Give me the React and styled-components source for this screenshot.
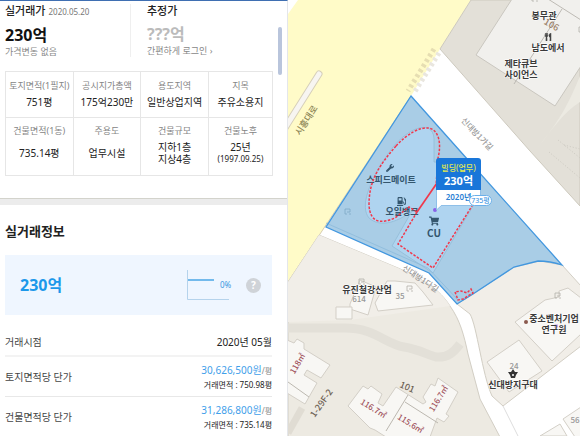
import React from 'react';
import styled, { createGlobalStyle } from 'styled-components';
import { FaWrench, FaGasPump, FaUtensils, FaShoppingCart } from 'react-icons/fa';

const GlobalStyle = createGlobalStyle`
    * {
        box-sizing: border-box;
    }
    body {
        margin: 0;
        background-color: #fff;
        color: #222;
        font-family: "Noto Sans", "Noto Sans CJK KR", sans-serif;
        font-size: 10px;
        line-height: 14px;
    }
    h2, p, dl, dd {
        margin: 0;
    }
`;

const Page = styled.div`
    display: grid;
    grid-template-columns: minmax(0, 288fr) minmax(0, 292fr);
    height: 100vh;
    overflow: hidden;
`;

const Panel = styled.aside`
    position: relative;
    min-width: 0;
    overflow: hidden;
    border-top: 1px solid #3f6fb2;
    border-right: 1px solid #e4e6ea;
`;

const ScrollThumb = styled.div`
    position: absolute;
    top: 26px;
    right: 5px;
    width: 4px;
    height: 48px;
    border-radius: 2px;
    background-color: #b9c5dc;
`;

const Summary = styled.section`
    padding: 3px 14px 22px 5px;
`;

const PriceRow = styled.div`
    display: grid;
    grid-template-columns: 125px 1fr;
    margin-bottom: 14px;
`;

const PriceBox = styled.div`
    padding-left: ${(props) => (props.$divided ? '16px' : '0')};
    border-left: ${(props) => (props.$divided ? '1px solid #efefef' : 'none')};
`;

const PriceTitle = styled.h2`
    font-size: 11px;
    font-weight: 500;
    line-height: 14px;
`;

const PriceDate = styled.span`
    margin-left: 3px;
    color: #777;
    font-size: 8px;
    font-weight: 400;
`;

const Price = styled.p`
    padding: 6px 0 2px;
    color: ${(props) => props.$color};
    font-size: 16px;
    font-weight: 700;
    line-height: 20px;
`;

const Note = styled.p`
    color: #888;
    font-size: 9px;
    line-height: 10px;
`;

const LoginLink = styled.a`
    color: #888;
    text-decoration: none;
`;

const InfoTable = styled.table`
    width: 100%;
    table-layout: fixed;
    border-collapse: collapse;
    text-align: center;
`;

const InfoCell = styled.td`
    height: ${(props) => (props.$tall ? '58px' : '46px')};
    padding: ${(props) => (props.$tall ? '5px 0 0' : '6px 0 0')};
    border: 1px solid #e6e6e6;
    vertical-align: top;
    &:last-child {
        width: 24%;
    }
`;

const InfoLabel = styled.div`
    color: #858585;
    font-size: 9px;
    line-height: 15px;
    white-space: nowrap;
`;

const InfoValue = styled.div`
    display: flex;
    flex-direction: column;
    justify-content: center;
    min-height: ${(props) => (props.$tall ? '29px' : '17px')};
    font-size: 10px;
    line-height: 12px;
    white-space: nowrap;
`;

const SmallText = styled.span`
    font-size: 8px;
`;

const Band = styled.div`
    height: 7px;
    border-top: 1px solid #d3d3cc;
    background-color: #ececec;
`;

const Deal = styled.section`
    padding: 16px 15px 0 5px;
`;

const DealTitle = styled.h2`
    font-size: 13px;
    font-weight: 700;
    line-height: 20px;
`;

const DealBox = styled.div`
    display: flex;
    align-items: center;
    height: 60px;
    margin: 14px 0 13px;
    padding: 0 11px 0 15px;
    background-color: #eff6ff;
`;

const DealPrice = styled.strong`
    flex: 1;
    color: #1c98ea;
    font-size: 16px;
    line-height: 20px;
`;

const Percent = styled.span`
    width: 26px;
    margin-left: -9px;
    color: #3997e0;
    font-size: 8px;
`;

const HelpButton = styled.button`
    width: 15px;
    height: 15px;
    padding: 0;
    border: 0;
    border-radius: 50%;
    background-color: #cfd3d8;
    color: #fff;
    font: inherit;
    font-weight: 700;
    line-height: 15px;
`;

const DealList = styled.dl`
    font-size: 10px;
`;

const DealItem = styled.div`
    display: flex;
    align-items: center;
    justify-content: space-between;
    height: ${(props) => (props.$short ? '29px' : '40px')};
    border-bottom: ${(props) => (props.$short ? '2px solid #f3f3f3' : '1px solid #e8e8e8')};
`;

const DealTerm = styled.dt`
    color: #444;
`;

const DealValue = styled.dd`
    text-align: right;
`;

const UnitPrice = styled.p`
    color: #3fa0ea;
    font-size: 10px;
    line-height: 14px;
`;

const Unit = styled.span`
    color: #888;
    font-size: 8px;
`;

const Area = styled.p`
    font-size: 8px;
    line-height: 13px;
`;

const MapArea = styled.main`
    position: relative;
    min-width: 0;
    overflow: hidden;
    background-color: #edeae2;
`;

const MapSvg = styled.svg`
    display: block;
    width: 100%;
    height: 100%;
    font-family: "Noto Sans CJK KR", sans-serif;
`;

const Poi = styled.text`
    fill: ${(props) => props.$color || '#3a3a3a'};
    font-size: ${(props) => props.$size || 9}px;
    font-weight: 700;
    text-anchor: middle;
    paint-order: stroke;
    stroke: ${(props) => props.$halo || '#fff'};
    stroke-width: 1px;
`;

const Num = styled.text`
    fill: ${(props) => props.$color || '#999'};
    font-size: ${(props) => props.$size || 8}px;
    font-weight: 500;
    text-anchor: middle;
`;

const Pin = styled.button`
    position: absolute;
    top: 158px;
    left: 148px;
    width: 45px;
    padding: 0;
    border: 0;
    background: none;
    font: inherit;
    text-align: center;
    white-space: nowrap;
`;

const PinHead = styled.span`
    display: block;
    padding: 3px 0 2px;
    border-radius: 3px 3px 0 0;
    background-color: #1976d9;
`;

const PinType = styled.span`
    display: block;
    color: #e4ea4c;
    font-size: 8px;
    font-weight: 500;
    line-height: 13px;
`;

const PinPrice = styled.span`
    display: block;
    color: #fff;
    font-size: 11px;
    font-weight: 700;
    line-height: 14px;
`;

const PinYear = styled.span`
    display: block;
    height: 16px;
    border: 1px solid #8ebfe8;
    border-top: 0;
    background-color: #fff;
    color: #2a7fd4;
    font-size: 8px;
    font-weight: 600;
    line-height: 13px;
`;

const PinTail = styled.svg`
    position: absolute;
    top: 47px;
    left: 0;
`;

const PinBadge = styled.span`
    position: absolute;
    top: 37px;
    left: 33px;
    width: 23px;
    height: 11px;
    border: 1px solid #6bb0ea;
    border-radius: 6px;
    background-color: #fff;
    color: #2a8be0;
    font-size: 7px;
    line-height: 9px;
`;

const infoRows = [
    [
        { label: '토지면적(1필지)', value: ['751평'] },
        { label: '공시지가총액', value: ['175억230만'] },
        { label: '용도지역', value: ['일반상업지역'] },
        { label: '지목', value: ['주유소용지'] },
    ],
    [
        { label: '건물면적(1동)', value: ['735.14평'] },
        { label: '주용도', value: ['업무시설'] },
        { label: '건물규모', value: ['지하1층', '지상4층'] },
        { label: '건물노후', value: ['25년'], small: '(1997.09.25)' },
    ],
];

const unitPrices = [
    { name: '토지면적당 단가', price: '30,626,500원', area: '750.98평' },
    { name: '건물면적당 단가', price: '31,286,800원', area: '735.14평' },
];

// little flag drawn on building corners
const Flag = ({ x, y, color }) => (
    <path
        d={`M${x + 2} ${y + 5} H${x} V${y} H${x + 5} V${y + 3} H${x + 2} M${x + 4} ${y + 5} h2`}
        fill="none"
        stroke={color || '#b3b0aa'}
        strokeWidth="0.8"
    />
);

const MapDrawing = () => (
    <MapSvg viewBox="288 0 292 436" preserveAspectRatio="xMidYMid slice" role="img" aria-label="지도">
        <rect x="288" y="0" width="292" height="436" fill="#fff" />

        {/* main road */}
        <path d="M298 0 H471 L440 49 L411 96 L320 234 L288 282 V14 Z" fill="#fffbc8" />
        <path d="M411 96 L320 234 L288 282" fill="none" stroke="#d8cfb0" />
        <path d="M280 136 L319 74" stroke="#d6cfb9" strokeWidth="7" strokeLinecap="round" />
        <path d="M280 136 L319 74" stroke="#f7f5f1" strokeWidth="5" strokeLinecap="round" />
        <path d="M434 49 L408 91" stroke="#e6deb2" strokeWidth="5" strokeDasharray="3 3" />
        <path d="M439 53 L414 93" stroke="#e9e6df" strokeWidth="5" strokeDasharray="3 3" />

        {/* upper right block */}
        <path d="M471 0 H580 V206 L530 151 L440 49 Z" fill="#e3e0d8" stroke="#cdc9be" />
        <path d="M536 150 C560 120 568 105 580 76 V102 C563 113 553 128 536 150" fill="#eceae2" />
        <path d="M512 -1 L476 55 L555 106 L581 66 V-1 Z" fill="#f1f0ed" stroke="#c9c6bf" />
        <path d="M562 9 L514 84 M548 -1 L581 20" fill="none" stroke="#bdbab4" />
        <path d="M558 140 L580 158 M549 152 L580 178 M564 145 L580 149" stroke="#ccc9c1" strokeDasharray="1 2" />
        <Flag x={532} y={-4} />
        <Flag x={579} y={27} />

        {/* lower left block */}
        <path d="M319 235 L398 268 C425 280 440 290 450 306 C460 320 464 335 468 354 L480 399 L500 437 H288 V282 Z" fill="#edeae2" stroke="#d2cec4" />
        <path d="M319 235 L398 268 C425 280 440 290 450 306 L350 320 L288 322 V282 Z" fill="#f1eee8" />
        <path d="M288 328 H345 C375 328 385 344 404 347 C418 349 428 355 436 357 C448 358 454 352 460 344" fill="none" stroke="#e3e0d8" strokeWidth="9" />
        <path d="M302 408 L288 433" stroke="#e0dcd3" strokeWidth="7" />

        {/* lower right block */}
        <path d="M457 304 L473 294 L514 267 L540 261 L562 265 L581 286 V346 L503 406 L492 396 C482 374 477 326 470 314 Z" fill="#f1eee8" stroke="#d2cec4" />
        <path d="M503 406 L518 436" stroke="#ddd" />

        {/* buildings */}
        <g fill="#f8f7f4" stroke="#d3cfc7">
            <path d="M360 280 L376 287 L368 315 L350 309 V304 L357 287 Z" />
            <path d="M336 307 H352 V319 H336 Z" />
            <path d="M387 281 H395 L415 283 L423 292 L433 305 L378 311 L375 303 Z" />
            <path d="M287 340 L294 343 L297 339 L304 343 V349 L330 365 L321 378 L307 370 L304 375 L317 383 L305 404 L287 393 Z" />
            <path d="M363 386 L368 389 L371 386 L382 394 L378 403 L383 406 L396 387 L423 404 L426 402 L423 397 L431 384 L435 386 L438 378 L458 392 L446 414 L449 416 L444 422 L437 418 L430 437 H386 L375 430 L370 428 L348 406 Z" />
            <path d="M515 322 L545 300 L559 297 V291 L568 288 L581 298 V334 L552 361 Z" />
            <path d="M487 362 L519 340 L542 371 L509 392 Z" />
            <path d="M540 436 L560 424 L567 436 Z M563 419 L581 407 V437 H575 Z" />
        </g>
        <path d="M288 382 L309 397 M408 395 L386 431 M405 402 L438 423" stroke="#bcb8b0" fill="none" />

        {/* selected parcel */}
        <path d="M411 96 L460 151 L562 265 Q550 261 538 261 L514 267 L473 294 L457 304 L429 273 L326 227 Z" fill="#a9cde6" />
        <path d="M388 154 C405 128 432 118 434 138 V162 L455 163 L473 206 L433 273 L392 246 L412 211 C395 224 379 227 369 218 C360 207 368 183 388 154" fill="#afd4f0" stroke="#93bbd6" strokeWidth="0.8" />
        <path d="M326 223 L428 268 L458 300" fill="none" stroke="#88b8da" strokeWidth="0.7" />
        <path d="M411 96 L460 151 L562 265 Q550 261 538 261 L514 267 L473 294 L457 304 L429 273 L326 227 Z" fill="none" stroke="#4297df" strokeWidth="1.3" />
        <Flag x={345} y={209} color="#7ea8c5" />

        {/* places on the parcel */}
        <g color="#34566e">
            <FaWrench x={386} y={164} size={8} />
            <FaGasPump x={397} y={197} size={9} />
            <FaShoppingCart x={429} y={216} size={10} />
        </g>
        <Poi x="391" y="183" $color="#34566e" $halo="#afd4f0">스피드메이트</Poi>
        <Poi x="402" y="215" $color="#34566e" $halo="#afd4f0">오일뱅크</Poi>
        <Poi x="434" y="237" $size={10} $color="#34566e" $halo="#afd4f0">CU</Poi>

        <g fill="none" stroke="#f0384c" strokeWidth="1.5" strokeDasharray="2.5 1.5">
            <path d="M396 146 C408 133 420 127 429 128 C438 130 442 142 438 158 L436 186" />
            <path d="M396 146 C378 167 369 181 369 205 C370 223 381 224 395 218 L409 207 L417 212" />
            <path d="M417 212 L398 244 L433 268 L472 206" />
            <path d="M455 292 L458 300 L463 299 L473 293 L471 289 L467 293 L461 291 Z" />
        </g>
        <path d="M417 212 L437 183" stroke="#f0384c" strokeWidth="1.7" />
        <circle cx="435" cy="210" r="2" fill="#8a63e8" />

        {/* other places */}
        <FaUtensils x={544} y={33} size={8} color="#444" />
        <Num x="552" y="28" transform="rotate(30 552 24)" $size={9} $color="#9a7f68">106</Num>
        <Poi x="544" y="19">봉무관</Poi>
        <Poi x="548" y="51">남도에서</Poi>
        <Poi x="521" y="67">제타큐브</Poi>
        <Poi x="521" y="78">사이언스</Poi>
        <Num x="359" y="302">614</Num>
        <Num x="400" y="299">35</Num>
        <Poi x="367" y="293">유진철강산업</Poi>
        <Flag x={359} y={279} />
        <Flag x={407} y={286} />
        <Flag x={555} y={293} />
        <circle cx="526" cy="322" r="2" fill="#8b5a4f" />
        <circle cx="556" cy="326" r="2" fill="#a25ce0" />
        <Poi x="554" y="322">중소벤처기업</Poi>
        <Poi x="554" y="333">연구원</Poi>
        <Num x="514" y="369">24</Num>
        {/* police mark */}
        <path d="M508 372 L511 372 L513 369 L515 372 L518 372 L516 375 L515 378 H511 L510 375 Z" fill="#333" />
        <circle cx="513" cy="375" r="1" fill="#fff" />
        <Poi x="513" y="388">신대방지구대</Poi>
        <Num x="575" y="423">56</Num>

        {/* street names */}
        <Num transform="translate(309 122) rotate(-57)" $size={9} $color="#8c8555">시흥대로</Num>
        <Num transform="translate(475 136) rotate(46)">신대방1가길</Num>
        <Num transform="translate(419 281) rotate(34)">신대방1다길</Num>
        <Num transform="translate(300 365) rotate(-60)" $color="#a0525c">118㎡</Num>
        <Num transform="translate(324 405) rotate(-55)" $size={9} $color="#6d6255">1-29F-2</Num>
        <Num transform="translate(406 390) rotate(23)" $size={9} $color="#6d6255">101</Num>
        <Num transform="translate(372 411) rotate(32)" $color="#a0525c">116.7㎡</Num>
        <Num transform="translate(409 426) rotate(32)" $color="#a0525c">115.6㎡</Num>
        <Num transform="translate(441 400) rotate(-58)" $color="#a0525c">116.7㎡</Num>
    </MapSvg>
);

const App = () => {
    return (
        <>
            <GlobalStyle />
            <Page>
                <Panel>
                    <Summary>
                        <PriceRow>
                            <PriceBox>
                                <PriceTitle>
                                    실거래가<PriceDate>2020.05.20</PriceDate>
                                </PriceTitle>
                                <Price $color="#111">230억</Price>
                                <Note>가격변동 없음</Note>
                            </PriceBox>
                            <PriceBox $divided>
                                <PriceTitle>추정가</PriceTitle>
                                <Price $color="#bbb">???억</Price>
                                <Note>
                                    <LoginLink href="#login">간편하게 로그인 ›</LoginLink>
                                </Note>
                            </PriceBox>
                        </PriceRow>
                        <InfoTable>
                            <tbody>
                                {infoRows.map((row, index) => (
                                    <tr key={index}>
                                        {row.map((item) => (
                                            <InfoCell key={item.label} $tall={index === 1}>
                                                <InfoLabel>{item.label}</InfoLabel>
                                                <InfoValue $tall={index === 1}>
                                                    {item.value.map((line) => <span key={line}>{line}</span>)}
                                                    {item.small && <SmallText>{item.small}</SmallText>}
                                                </InfoValue>
                                            </InfoCell>
                                        ))}
                                    </tr>
                                ))}
                            </tbody>
                        </InfoTable>
                    </Summary>
                    <Band />
                    <Deal>
                        <DealTitle>실거래정보</DealTitle>
                        <DealBox>
                            <DealPrice>230억</DealPrice>
                            <svg width="42" height="30" viewBox="0 0 42 30" fill="none">
                                <path d="M0.5 0 V29.5 H42" stroke="#b5d3ec" />
                                <path d="M1 10 H27" stroke="#4aa6e6" strokeWidth="1.5" />
                            </svg>
                            <Percent>0%</Percent>
                            <HelpButton type="button">?</HelpButton>
                        </DealBox>
                        <DealList>
                            <DealItem $short>
                                <DealTerm>거래시점</DealTerm>
                                <DealValue>2020년 05월</DealValue>
                            </DealItem>
                            {unitPrices.map((item) => (
                                <DealItem key={item.name}>
                                    <DealTerm>{item.name}</DealTerm>
                                    <DealValue>
                                        <UnitPrice>{item.price}<Unit>/평</Unit></UnitPrice>
                                        <Area>거래면적 : {item.area}</Area>
                                    </DealValue>
                                </DealItem>
                            ))}
                        </DealList>
                    </Deal>
                    <ScrollThumb />
                </Panel>
                <MapArea>
                    <MapDrawing />
                    <Pin type="button">
                        <PinHead>
                            <PinType>빌딩(업무)</PinType>
                            <PinPrice>230억</PinPrice>
                        </PinHead>
                        <PinYear>2020년</PinYear>
                        <PinTail width="10" height="6" viewBox="0 0 10 6">
                            <path d="M0.5 0 V5 L6 0" fill="#fff" stroke="#8ebfe8" />
                        </PinTail>
                        <PinBadge>735평</PinBadge>
                    </Pin>
                </MapArea>
            </Page>
        </>
    );
};

export default App;
